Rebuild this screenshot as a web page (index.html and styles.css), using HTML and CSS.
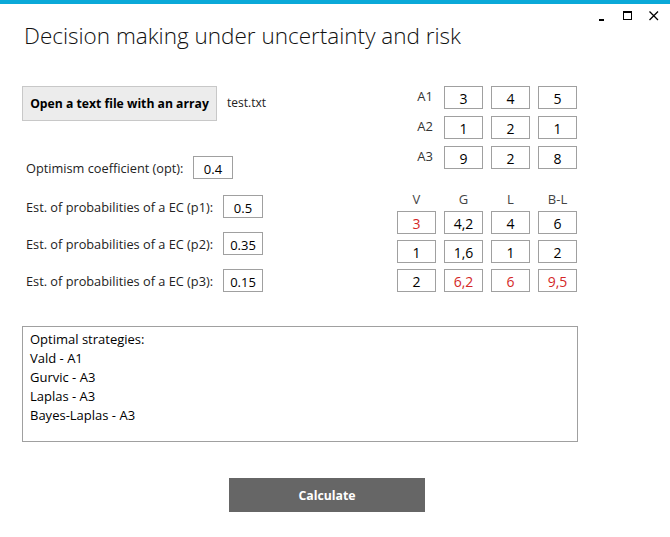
FILE: index.html
```html
<!DOCTYPE html>
<html>
<head>
<meta charset="utf-8">
<link rel="stylesheet" href="styles.css">
</head>
<body>
<div class="window">
  <div class="topbar"></div>
  <div class="chrome">
    <svg class="ctl" width="12" height="12" viewBox="0 0 12 12"><rect x="3" y="9" width="5" height="2" fill="#000"/></svg>
    <svg class="ctl" width="12" height="12" viewBox="0 0 12 12"><rect x="1.5" y="1.5" width="8" height="8" fill="none" stroke="#000" stroke-width="1"/><rect x="1" y="1" width="9" height="2" fill="#000"/></svg>
    <svg class="ctl" width="12" height="12" viewBox="0 0 12 12"><path d="M1.5 1.5 L10 10 M10 1.5 L1.5 10" stroke="#000" stroke-width="1.3"/></svg>
  </div>
  <h1 class="title">Decision making under uncertainty and risk</h1>

  <div class="content">
    <div class="left">
      <div class="file-row">
        <button class="open-btn">Open a text file with an array</button>
        <span class="filename">test.txt</span>
      </div>
      <div class="param param-opt">
        <span class="label label-opt">Optimism coefficient (opt):</span>
        <span class="box">0.4</span>
      </div>
      <div class="param param-p1">
        <span class="label label-p">Est. of probabilities of a EC (p1):</span>
        <span class="box">0.5</span>
      </div>
      <div class="param">
        <span class="label label-p">Est. of probabilities of a EC (p2):</span>
        <span class="box">0.35</span>
      </div>
      <div class="param">
        <span class="label label-p">Est. of probabilities of a EC (p3):</span>
        <span class="box">0.15</span>
      </div>
    </div>

    <div class="right">
      <div class="grid matrix">
        <span class="rowlabel">A1</span><span class="cell">3</span><span class="cell">4</span><span class="cell">5</span>
        <span class="rowlabel">A2</span><span class="cell">1</span><span class="cell">2</span><span class="cell">1</span>
        <span class="rowlabel">A3</span><span class="cell">9</span><span class="cell">2</span><span class="cell">8</span>
      </div>
      <div class="grid results">
        <span class="head">V</span><span class="head">G</span><span class="head">L</span><span class="head">B-L</span>
        <span class="cell red">3</span><span class="cell">4,2</span><span class="cell">4</span><span class="cell">6</span>
        <span class="cell">1</span><span class="cell">1,6</span><span class="cell">1</span><span class="cell">2</span>
        <span class="cell">2</span><span class="cell red">6,2</span><span class="cell red">6</span><span class="cell red">9,5</span>
      </div>
    </div>
  </div>

  <div class="output">
    <div>Optimal strategies:</div>
    <div>Vald - A1</div>
    <div>Gurvic - A3</div>
    <div>Laplas - A3</div>
    <div>Bayes-Laplas - A3</div>
  </div>

  <button class="calc-btn">Calculate</button>
</div>
</body>
</html>
```

FILE: styles.css
```css
* { box-sizing: border-box; }
html, body { margin: 0; padding: 0; background: #fff; }
body {
  font-family: "Open Sans", "Noto Sans", sans-serif;
  font-size: 12px;
  color: #000;
}
.window { width: 670px; height: 537px; overflow: hidden; }
.topbar { height: 4px; background: #0aa9d8; }
.chrome {
  display: flex;
  justify-content: flex-end;
  gap: 14px;
  padding: 6px 10px 0 0;
  height: 20px;
}
.ctl { display: block; }
.title {
  margin: 0 0 0 24px;
  font-weight: 300;
  font-size: 22.5px;
  line-height: 24px;
  height: 62px;
  padding-top: 0;
  color: #111;
}
.content {
  display: grid;
  grid-template-columns: 375px 181px;
  padding-left: 22px;
}
.left { display: flex; flex-direction: column; }
.file-row { display: flex; align-items: center; height: 35px; }
.open-btn {
  width: 195px;
  height: 35px;
  background: #ececec;
  border: 1px solid #c8c8c8;
  font-family: inherit;
  font-weight: 700;
  font-size: 12.2px;
  color: #000;
  padding: 0;
}
.filename { margin-left: 10px; font-size: 12px; color: #222; margin-top: -2px; }
.param { display: flex; align-items: center; height: 23px; margin-top: 14px; padding-left: 4px; }
.param-opt { margin-top: 35px; }
.param-p1 { margin-top: 16px; }
.label { display: block; font-size: 12.75px; color: #222; }
.label-opt { width: 167px; }
.label-p { width: 197px; }
.box {
  display: flex;
  align-items: center;
  justify-content: center;
  width: 40px;
  height: 23px;
  border: 1px solid #a0a0a0;
  padding-top: 3px;
  font-size: 13px;
}
.grid { display: grid; grid-template-columns: 39px 39px 39px 39px; column-gap: 8px; }
.matrix { row-gap: 7px; }
.results { row-gap: 6px; margin-top: 22px; }
.rowlabel {
  text-align: right;
  padding-right: 3px;
  line-height: 21px;
  font-size: 13px;
  color: #333;
}
.cell {
  display: flex;
  align-items: center;
  justify-content: center;
  height: 23px;
  border: 1px solid #a0a0a0;
  padding-top: 2px;
  font-size: 14px;
}
.red { color: #d42828; }
.head {
  text-align: center;
  font-size: 13px;
  color: #444;
  line-height: 16px;
  margin-bottom: -2px;
}
.output {
  margin: 34px 0 0 22px;
  width: 556px;
  height: 116px;
  border: 1px solid #a0a0a0;
  padding: 3px 7px;
  font-size: 13px;
  line-height: 19px;
}
.calc-btn {
  display: block;
  margin: 36px 0 0 229px;
  width: 196px;
  height: 34px;
  background: #666;
  border: none;
  color: #fff;
  font-family: inherit;
  font-weight: 700;
  font-size: 12.3px;
  padding: 0;
}
```
